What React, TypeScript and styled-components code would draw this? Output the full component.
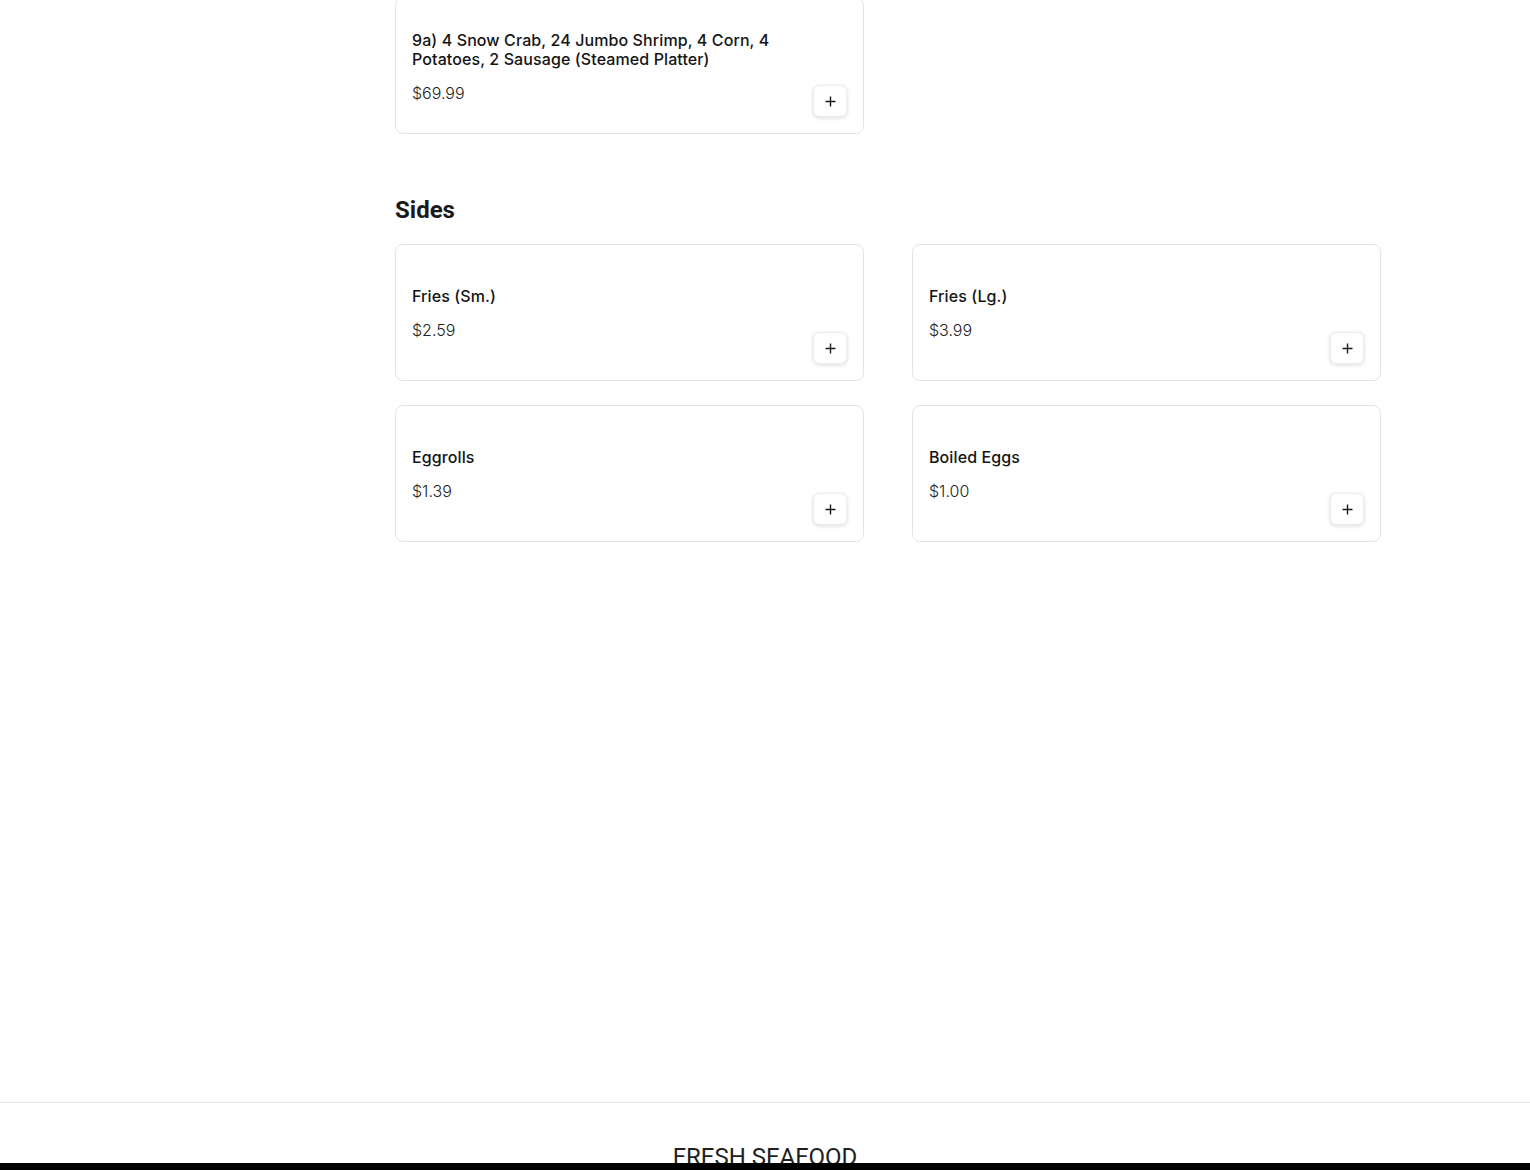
import styled, { createGlobalStyle } from "styled-components";

const GlobalStyle = createGlobalStyle`
  * { box-sizing: border-box; }
  body {
    margin: 0;
    background: #ffffff;
    font-family: Inter, "Open Sans", "Liberation Sans", sans-serif;
    color: #1a1a1a;
    overflow: hidden;
  }
`;

const Page = styled.div`
  display: flex;
  flex-direction: column;
  min-height: 100vh;
`;

const Layout = styled.div`
  width: 1240px;
  margin: -3px auto 0;
  min-height: 1105px;
  display: flex;
`;

const Sidebar = styled.aside`
  flex: none;
  width: 250px;
`;

const Content = styled.main`
  width: 986px;
  display: flex;
  flex-direction: column;
`;

const Section = styled.section`
  & + & {
    margin-top: 62px;
  }
`;

const SectionTitle = styled.h2`
  margin: 0 0 20px;
  font-family: Roboto, "Liberation Sans", sans-serif;
  font-size: 24px;
  line-height: 28px;
  font-weight: 700;
  color: #1a1a1a;
`;

const Grid = styled.div`
  display: grid;
  grid-template-columns: repeat(2, 469px);
  column-gap: 48px;
  row-gap: 24px;
`;

const Card = styled.div`
  display: flex;
  align-items: center;
  gap: 16px;
  min-height: 137px;
  padding: 16px;
  border: 1px solid #e3e3e3;
  border-radius: 8px;
  background: #fff;
`;

const Info = styled.div`
  flex: 1;
  display: flex;
  flex-direction: column;
  gap: 15px;
  padding-top: 2px;
`;

const Name = styled.div`
  font-size: 16px;
  line-height: 19px;
  font-weight: 500;
  color: #141414;
  letter-spacing: 0.1px;
`;

const Price = styled.div`
  font-size: 16px;
  line-height: 19px;
  font-weight: 300;
  color: #222;
`;

const AddButton = styled.button`
  align-self: flex-end;
  flex: none;
  width: 34px;
  height: 32px;
  display: flex;
  align-items: center;
  justify-content: center;
  padding: 0;
  border: 1px solid #ececec;
  border-radius: 6px;
  background: #fff;
  box-shadow: 0 1px 4px rgba(0, 0, 0, 0.14);
  cursor: pointer;
`;

const Footer = styled.footer`
  border-top: 1px solid #e2e2e2;
  padding-top: 40px;
  text-align: center;
  font-family: Roboto, "Liberation Sans", sans-serif;
  font-size: 24px;
  line-height: 28px;
  color: #1f1f1f;
  height: 200px;
`;

const BottomBar = styled.div`
  position: fixed;
  left: 0;
  right: 0;
  bottom: 0;
  height: 7px;
  background: #000;
`;

type Item = { name: string; price: string };

const platters: Item[] = [
  {
    name: "9a) 4 Snow Crab, 24 Jumbo Shrimp, 4 Corn, 4 Potatoes, 2 Sausage (Steamed Platter)",
    price: "$69.99",
  },
];

const sides: Item[] = [
  { name: "Fries (Sm.)", price: "$2.59" },
  { name: "Fries (Lg.)", price: "$3.99" },
  { name: "Eggrolls", price: "$1.39" },
  { name: "Boiled Eggs", price: "$1.00" },
];

function PlusIcon() {
  return (
    <svg width="11" height="11" viewBox="0 0 11 11">
      <path d="M5.5 0.5v10M0.5 5.5h10" stroke="#1a1a1a" strokeWidth="1.4" />
    </svg>
  );
}

function MenuCard({ item }: { item: Item }) {
  return (
    <Card>
      <Info>
        <Name>{item.name}</Name>
        <Price>{item.price}</Price>
      </Info>
      <AddButton aria-label="Add">
        <PlusIcon />
      </AddButton>
    </Card>
  );
}

function App() {
  return (
    <Page>
      <GlobalStyle />
      <Layout>
        <Sidebar />
        <Content>
          <Section>
            <Grid>
              {platters.map((item) => (
                <MenuCard key={item.name} item={item} />
              ))}
            </Grid>
          </Section>
          <Section>
            <SectionTitle>Sides</SectionTitle>
            <Grid>
              {sides.map((item) => (
                <MenuCard key={item.name} item={item} />
              ))}
            </Grid>
          </Section>
        </Content>
      </Layout>
      <Footer>FRESH SEAFOOD</Footer>
      <BottomBar />
    </Page>
  );
}

export default App;
